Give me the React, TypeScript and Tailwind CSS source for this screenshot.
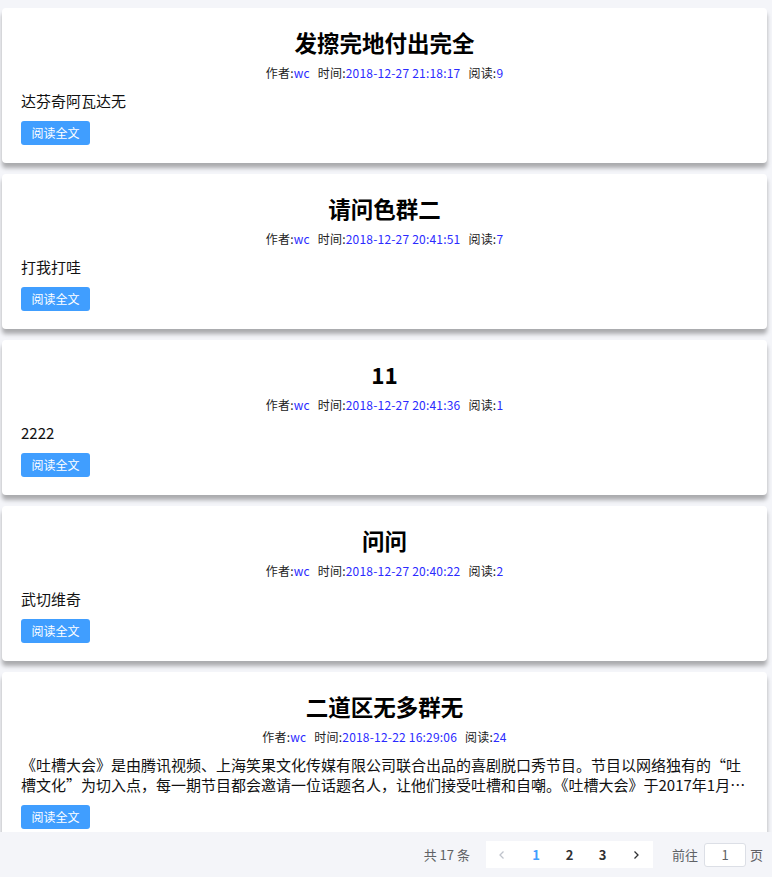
import React from 'react';

type Post = {
  title: string;
  author: string;
  time: string;
  reads: number;
  summary: string;
};

const posts: Post[] = [
  { title: '发擦完地付出完全', author: 'wc', time: '2018-12-27 21:18:17', reads: 9, summary: '达芬奇阿瓦达无' },
  { title: '请问色群二', author: 'wc', time: '2018-12-27 20:41:51', reads: 7, summary: '打我打哇' },
  { title: '11', author: 'wc', time: '2018-12-27 20:41:36', reads: 1, summary: '2222' },
  { title: '问问', author: 'wc', time: '2018-12-27 20:40:22', reads: 2, summary: '武切维奇' },
  {
    title: '二道区无多群无',
    author: 'wc',
    time: '2018-12-22 16:29:06',
    reads: 24,
    summary:
      '《吐槽大会》是由腾讯视频、上海笑果文化传媒有限公司联合出品的喜剧脱口秀节目。节目以网络独有的“吐槽文化”为切入点，每一期节目都会邀请一位话题名人，让他们接受吐槽和自嘲。《吐槽大会》于2017年1月8日起每周日在腾讯视频播出。',
  },
];

function PostCard({ post }: { post: Post }) {
  return (
    <div className="shrink-0 bg-white rounded-[4px] shadow-[0_5px_4px_rgba(0,0,0,0.3)] px-[19px] pt-[18px] pb-[18px]">
      <h2 className="text-center text-[22.5px] leading-[32px] font-bold text-black">{post.title}</h2>
      <div className="mt-[7px] text-center text-[12px] leading-[16px] text-[#222] tracking-[0.2px]">
        <span>
          作者:<span className="text-[#2b2bff]">{post.author}</span>
        </span>
        <span className="ml-[8px]">
          时间:<span className="text-[#2b2bff]">{post.time}</span>
        </span>
        <span className="ml-[8px]">
          阅读:<span className="text-[#2b2bff]">{post.reads}</span>
        </span>
      </div>
      <p className="mt-[10px] h-[40px] overflow-hidden text-[15px] leading-[20px] text-[#111] line-clamp-2 [&:not(:has(br))]:h-auto">
        {post.summary}
      </p>
      <button className="mt-[10px] block h-6 w-[69px] rounded-[3px] bg-[#409eff] text-[12px] text-white">
        阅读全文
      </button>
    </div>
  );
}

function Pagination() {
  return (
    <div className="h-[45px] flex items-center justify-end pr-[9px] text-[13px] text-[#606266]">
      <span className="mr-[16px]">共 17 条</span>
      <div className="flex h-[27px] items-center bg-white">
        <button className="w-[33px] h-full flex items-center justify-center text-[#c0c4cc]">
          <svg width="10" height="10" viewBox="0 0 10 10" fill="none" stroke="currentColor" strokeWidth="1.3">
            <path d="M6.5 1.5 3 5l3.5 3.5" />
          </svg>
        </button>
        <button className="w-[34px] h-full font-bold text-[#409eff]">1</button>
        <button className="w-[33px] h-full font-bold text-[#303133]">2</button>
        <button className="w-[33px] h-full font-bold text-[#303133]">3</button>
        <button className="w-[34px] h-full flex items-center justify-center text-[#303133]">
          <svg width="10" height="10" viewBox="0 0 10 10" fill="none" stroke="currentColor" strokeWidth="1.3">
            <path d="M3.5 1.5 7 5 3.5 8.5" />
          </svg>
        </button>
      </div>
      <span className="ml-[19px]">前往</span>
      <div className="ml-[6px] flex h-[24px] w-[42px] items-center justify-center rounded-[3px] border border-[#dcdfe6] bg-white text-[#606266]">
        1
      </div>
      <span className="ml-[4px]">页</span>
    </div>
  );
}

export default function App() {
  return (
    <div className="h-[877px] bg-[#f4f5f9] font-['Noto_Sans_CJK_SC',sans-serif] flex flex-col">
      <div className="h-[832px] overflow-hidden pt-[8px] pl-[2px] pr-[5px] flex flex-col gap-[11px]">
        {posts.map((p) => (
          <PostCard key={p.title} post={p} />
        ))}
      </div>
      <Pagination />
    </div>
  );
}
